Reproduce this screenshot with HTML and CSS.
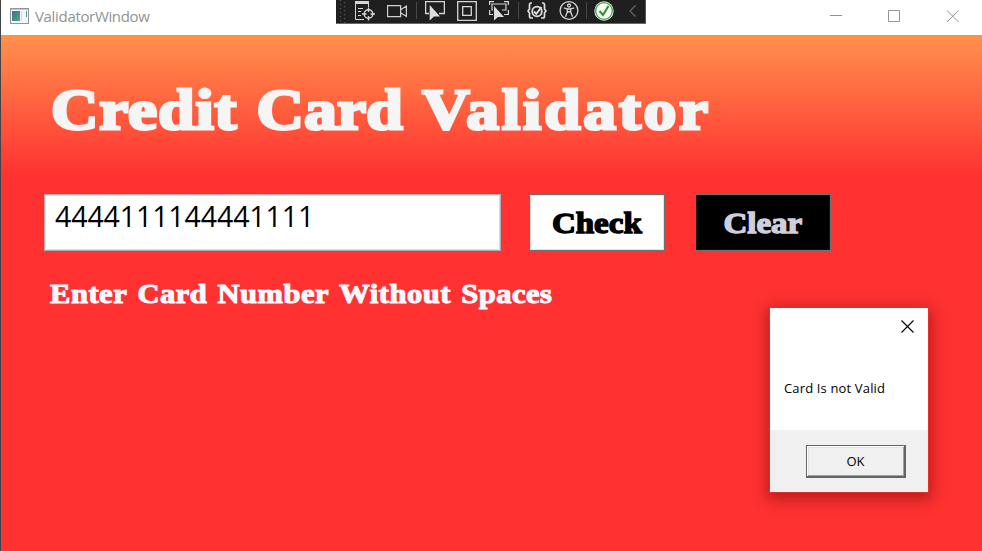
FILE: index.html
```
<!DOCTYPE html>
<html lang="en">
<head>
<meta charset="utf-8">
<title>ValidatorWindow</title>
<link rel="stylesheet" href="styles.css">
</head>
<body>
<div class="window">
  <header class="titlebar">
    <svg class="app-icon" width="19" height="16" viewBox="0 0 19 16"><defs><linearGradient id="g" x2="1" y2="1"><stop stop-color="#3a6e9c"/><stop offset="1" stop-color="#54a874"/></linearGradient></defs><rect x=".5" y=".5" width="18" height="15" fill="#f4f5f8" stroke="#929497"/><path d="M1 1.5h17" stroke="#c4c7cc"/><rect x="2" y="3" width="8" height="10" fill="url(#g)"/><path d="M11.5 3v10" stroke="#d5d8df"/><path d="M16.5 3v6" stroke="#4b9d88"/></svg>
    <span class="caption">ValidatorWindow</span>
    <svg class="controls" width="129" height="13" viewBox="0 0 129 13" fill="none" stroke="#929292"><path d="M0 5.500h12M58.500 .5h11v11h-11zM117 .5l11.500 11.500M128.500 .5L117 12"/></svg>
  </header>
  <main class="content">
    <h1 class="display heading"><span>Credit</span><span>Card</span><span>Validator</span></h1>
    <div class="form">
      <div class="field"><span>4444111144441111</span></div>
      <button class="display btn check"><span>Check</span></button>
      <button class="display btn clear"><span>Clear</span></button>
    </div>
    <p class="display hint"><span>Enter</span><span>Card</span><span>Number</span><span>Without</span><span>Spaces</span></p>
  </main>
</div>

<div class="toolbar">
  <svg class="grip" width="7" height="23" viewBox="0 0 7 23"><path d="M1.500 0v23M5.500 2v21" stroke="#555" stroke-width="1.300" stroke-dasharray="1.300 2.700"/></svg>
  <svg width="20" height="22" viewBox="0 0 20 22" fill="none" stroke="#d6d6d6"><path d="M0 1h14v3H0z" fill="#d6d6d6" stroke="none"/><path d="M.5 3v16.500H9M13.500 4v3M3 8.500h5M3 11.500h3M3 15.500h3"/><circle cx="13.500" cy="14" r="4.300" stroke-width="1.400"/><path d="M13.500 7.500v4.500M13.500 16v4.500M7 14h4.500M15.500 14H20" stroke-width="1.300"/></svg>
  <svg width="20" height="22" viewBox="0 0 20 22" fill="none" stroke="#d0d0d0" stroke-width="1.200"><path d="M.6 5.600h13v11H.6zM14 9.500l5.400-3.500v10.500L14 13"/></svg>
  <i class="sep"></i>
  <svg width="20" height="22" viewBox="0 0 20 22"><path d="M4 13.500H.6V1.600h18.800v11.900H14" fill="none" stroke="#d6d6d6" stroke-width="1.300"/><path d="M4.700 5v15.500l4.300-4h6z" fill="#dedede"/></svg>
  <svg width="20" height="22" viewBox="0 0 20 22" fill="none" stroke="#d6d6d6" stroke-width="1.300"><path d="M.7 1.700h18.600v18.600H.7zM5.700 6.700h8.600v8.600H5.700z"/></svg>
  <svg width="20" height="22" viewBox="0 0 20 22"><path d="M.6 5V1.600H5M15 1.600h4.400V5M.6 10v4.500H4M19.400 10v4.500H15M4 10H3V4h14v6h-4" fill="none" stroke="#d6d6d6" stroke-width="1.200"/><path d="M5 6v14.500l4-3.500h6z" fill="#dedede"/></svg>
  <i class="sep"></i>
  <svg width="20" height="22" viewBox="0 0 20 22" fill="none" stroke="#e0e0e0" stroke-width="1.700"><path d="M5 3H4Q2.500 3 2.500 5v4L1 11l1.500 2v3q0 2 1.500 2h2M15 3h1q1.500 0 1.500 2v4l1.500 2-1.500 2v3q0 2-1.500 2h-2"/><circle cx="10" cy="11.500" r="4.800" stroke-width="1.800"/><path d="M7 11.500l2.300 2.300L14.500 7" stroke-width="1.800"/></svg>
  <svg width="20" height="22" viewBox="0 0 20 22" fill="none" stroke="#d6d6d6" stroke-width="1.300"><circle cx="10" cy="10.500" r="8.900"/><circle cx="10" cy="5.500" r="1.500"/><path d="M4.800 7.800L8.300 9v3l-1.800 4.700M15.200 7.800L11.700 9v3l1.800 4.700M8.300 9h3.400M8.500 12.500l1.500-1 1.500 1"/></svg>
  <i class="sep late"></i>
  <svg width="20" height="22" viewBox="0 0 20 22"><circle cx="10" cy="11" r="9.700" fill="#eef5ee"/><circle cx="10" cy="11" r="8.300" fill="#f8fbf8" stroke="#47a147" stroke-width="1.300"/><path d="M5.500 11l3.500 4 5.500-9" fill="none" stroke="#359435" stroke-width="2.200"/></svg>
  <svg class="chevron" width="7" height="12" viewBox="0 0 7 12"><path d="M6.500 .5L1 6l5.500 5.500" fill="none" stroke="#686868" stroke-width="1.200"/></svg>
</div>

<div class="dialog" role="dialog">
  <div class="dialog-body">
    <svg class="close" width="13" height="13" viewBox="0 0 13 13"><path d="M.5 .5l12 12M12.500 .5l-12 12" stroke="#000" stroke-width="1.100"/></svg>
    <p class="message">Card Is not Valid</p>
  </div>
  <div class="dialog-footer"><button class="ok">OK</button></div>
</div>
</body>
</html>
```
FILE: styles.css
```
* { box-sizing: border-box; }
body { margin: 0; width: 982px; height: 551px; overflow: hidden; position: relative; font-family: "Open Sans", sans-serif; }
h1, p { margin: 0; }
button { padding: 0; }
.window { height: 551px; border-left: 1px solid #444; display: flex; flex-direction: column; }
.titlebar { height: 35px; background: #fff; display: flex; align-items: flex-start; padding: 8px 23px 0 9px; }
.caption { margin: -2px auto 0 6px; font-size: 15px; line-height: 20px; letter-spacing: -0.33px; color: #929292; }
.controls { margin-top: 2px; }
.content { flex: 1; padding: 38px 0 0 43px; background: linear-gradient(#ff914d 0, #ff3131 142px); }
.display { font-family: "Liberation Serif", serif; font-weight: 700; }
.heading { display: flex; gap: 17px; width: max-content; margin-left: 7px; height: 76px; line-height: 74px; font-size: 58px; color: #f5f5f5; -webkit-text-stroke: 3px #f5f5f5; transform: scaleX(1.13); transform-origin: left; white-space: nowrap; }
.heading span:nth-child(1) { letter-spacing: 0.8px; }
.heading span:nth-child(2) { letter-spacing: 0.2px; }
.heading span:nth-child(3) { letter-spacing: 2.5px; }
.form { display: flex; margin-top: 45px; }
.field { width: 457px; height: 57px; border: 1px solid #abadb3; box-shadow: inset 0 0 0 1px #f0d5d7; background: #fff; padding: 2px 0 0 10px; font-size: 28.5px; line-height: 38px; letter-spacing: -0.1px; color: #000; }
.btn { width: 136px; height: 57px; border: 1px solid #707070; font-size: 30px; }
.btn span { display: inline-block; transform: scaleX(1.1); -webkit-text-stroke: 1.4px; }
.check { margin-left: 28px; background: #fff; color: #000; box-shadow: inset 0 0 0 1px #fbdada; }
.clear { margin-left: 30px; background: #000; color: #d0cedd; box-shadow: inset 0 0 0 1px #260808; }
.hint { display: flex; gap: 9px; width: max-content; margin: 26px 0 0 6px; line-height: 34px; font-size: 27px; color: #f8f8ff; -webkit-text-stroke: 1.1px #f8f8ff; transform: scaleX(1.13); transform-origin: left; letter-spacing: 0.47px; white-space: nowrap; }
.toolbar { position: absolute; left: 336px; top: 0; width: 310px; height: 24px; background: #1f1f1f; border-bottom: 1px solid #686868; border-right: 1px solid #555; display: flex; padding-left: 3px; }
.toolbar svg { margin-right: 12px; flex: none; }
.toolbar .grip { margin-right: 9px; }
.sep { width: 1px; height: 17px; margin: 2px 8px 0 -3px; background: #484848; }
.sep.late { margin: 2px 7px 0 -5px; }
.toolbar .chevron { margin: 5px 0 0 3px; }
.dialog { position: absolute; left: 770px; top: 308px; width: 158px; height: 184px; display: flex; flex-direction: column; background: #fff; box-shadow: 0 0 0 1px #e92d2d, 0 4px 14px 3px rgba(70,0,0,.42); font-size: 13px; color: #000; }
.dialog-body { flex: 1; display: flex; flex-direction: column; padding: 12px 14px 0; }
.close { align-self: flex-end; }
.message { margin-top: 45px; line-height: 20px; letter-spacing: 0.15px; white-space: nowrap; }
.dialog-footer { height: 62px; background: #f0f0f0; display: flex; justify-content: flex-end; padding: 15px 22px 0 0; }
.ok { width: 100px; height: 33px; background: #f0f0f0; border: solid #646464; border-width: 1px 2px 2px 1px; box-shadow: inset 1px 1px #fff, inset -1px -1px #a0a0a0, inset 2px 2px #e3e3e3; font: 13px "Open Sans", sans-serif; color: #000; }
```
